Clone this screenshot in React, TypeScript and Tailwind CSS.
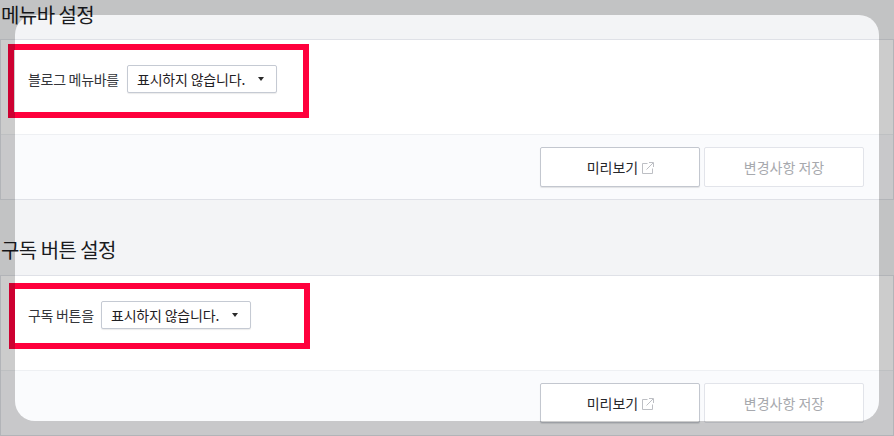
import React from "react";

function ExternalIcon() {
  return (
    <svg width="12" height="12" viewBox="0 0 12 12" fill="none" stroke="#bdbfc4" strokeWidth="1" className="ml-[4px] mt-[1px] -mr-[1px]">
      <path d="M5.5 1.5H0.5V11.5H10.5V6.5" />
      <path d="M4.5 7.5L11 1M7 0.5H11.5V5" />
    </svg>
  );
}

function Section({ title, label, titleClass, labelClass, bodyClass, footClass, redClass }: { title: string; label: string; titleClass: string; labelClass: string; bodyClass: string; footClass: string; redClass: string }) {
  return (
    <section className="relative">
      <h2 className={`${titleClass} pl-[1px] text-[20px] leading-[26px] tracking-[-0.55px] font-normal text-[#1a1b1e]`}>{title}</h2>
      <div className="border border-[#dfe1e7] bg-white w-[894px]">
        <div className={`${bodyClass} flex items-start pl-[27px] pt-[25px] text-[14px] text-[#33353a] border-b border-[#eef0f3]`}>
          <span className={`${labelClass} leading-[28px] tracking-[-0.3px] whitespace-nowrap`}>{label}</span>
          <div className="flex h-[28px] w-[150px] items-center justify-between rounded-[2px] border border-[#c5cad3] bg-white pl-[9px] pr-[12px] text-[#1f2023] shadow-[0_1px_1px_rgba(0,0,0,0.08)]">
            <span className="tracking-[-0.2px]">표시하지 않습니다.</span>
            <span className="h-0 w-0 border-x-[3px] border-t-[4px] border-x-transparent border-t-[#2a2a2a]" />
          </div>
        </div>
        <div className={`${footClass} flex items-start justify-end gap-[4px] bg-[#fafbfd] pr-[29px] pt-[12px]`}>
          <button className="flex h-[40px] w-[160px] items-center justify-center rounded-[2px] border border-[#c3c7cf] bg-white text-[14px] text-[#26272b] shadow-[0_1px_1px_rgba(0,0,0,0.1)]">
            미리보기
            <ExternalIcon />
          </button>
          <button className="flex h-[40px] w-[160px] items-center justify-center rounded-[2px] border border-[#e2e4ea] bg-white text-[14px] text-[#a7a9ae]">
            변경사항 저장
          </button>
        </div>
      </div>
      <div className={`${redClass} absolute border-[6px] border-[#ff003c]`} />
    </section>
  );
}

export default function App() {
  return (
    <div className="relative h-[436px] w-[894px] overflow-hidden bg-[#f3f4f6] font-['Noto_Sans_CJK_KR','Noto_Sans',sans-serif]">
      <Section
        title="메뉴바 설정"
        label="블로그 메뉴바를"
        labelClass="w-[99px]"
        titleClass="h-[39px] pt-[2px]"
        bodyClass="h-[95px]"
        footClass="h-[64px]"
        redClass="left-[8px] top-[44px] h-[74px] w-[301px]"
      />
      <Section
        title="구독 버튼 설정"
        label="구독 버튼을"
        labelClass="w-[73px]"
        titleClass="h-[75px] pt-[37px]"
        bodyClass="h-[95px]"
        footClass="h-[64px]"
        redClass="left-[9px] top-[83px] h-[66px] w-[301px]"
      />
      <div className="absolute left-[15px] top-[15px] h-[406px] w-[864px] rounded-[20px] shadow-[0_0_0_1000px_rgba(0,0,0,0.2)]" />
    </div>
  );
}
